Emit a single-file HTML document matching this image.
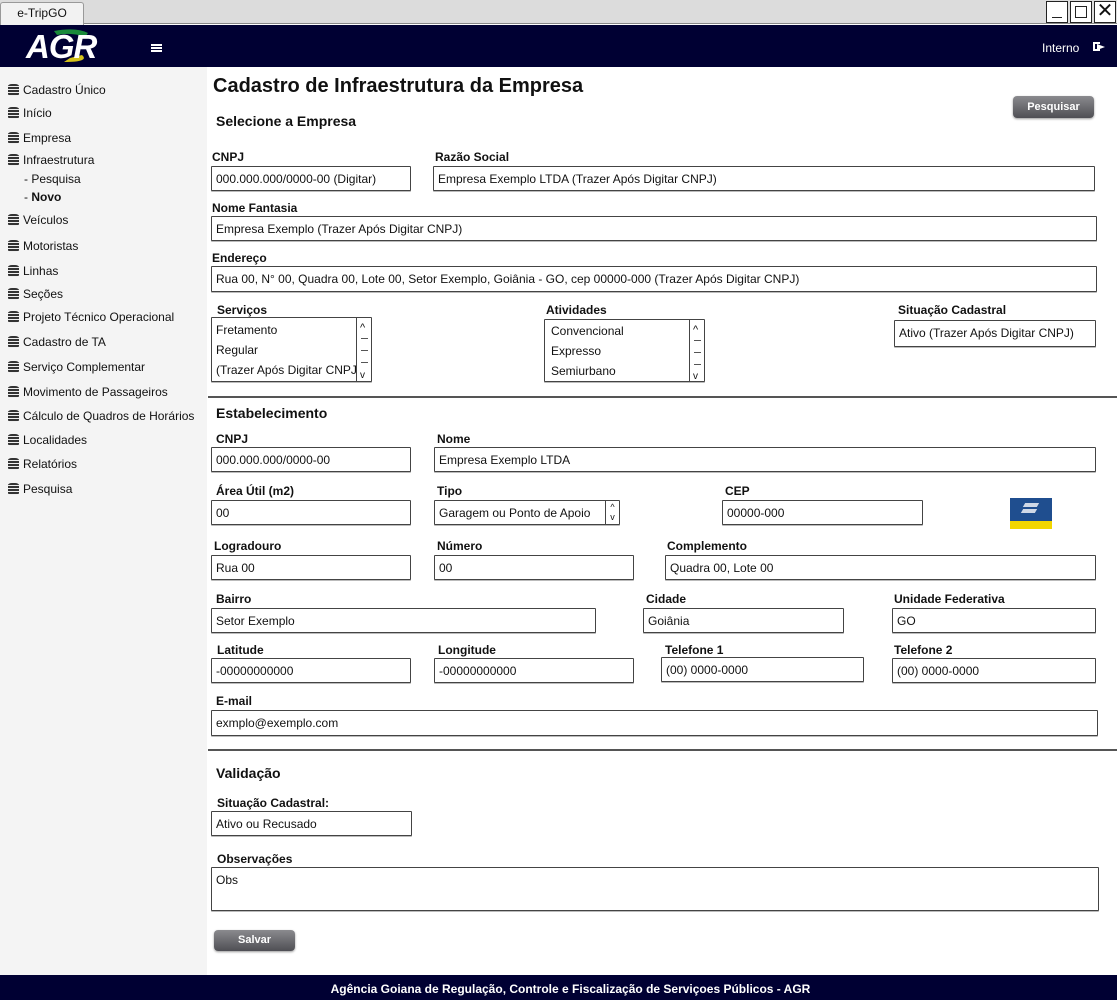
<!DOCTYPE html>
<html><head><meta charset="utf-8">
<style>
*{box-sizing:border-box;margin:0;padding:0}
body{width:1117px;height:1000px;position:relative;overflow:hidden;background:#fff;font-family:"Liberation Sans",Arial,sans-serif;font-size:12px;color:#111}
.a{position:absolute}
.lb{position:absolute;font-weight:bold;font-size:12px;color:#111}
.in{position:absolute;border:1px solid #444;border-radius:1px;background:#fff;height:25px;padding:0 4px;line-height:25px;font-size:12px;box-shadow:0 1px 0 #bbb;white-space:nowrap;overflow:hidden}
.btn{position:absolute;background:linear-gradient(#8a8a8e,#4f4f54);border-radius:4px;color:#fff;font-weight:bold;font-size:11px;text-align:center;box-shadow:0 1px 2px #999}
.nav{position:absolute;left:8px;font-size:12px;color:#111;display:flex;align-items:center}
.ic{width:11px;height:12px;margin-right:4px;display:inline-block;background:repeating-linear-gradient(#333 0 2px,#eee 2px 3px);border-radius:4px/2px}
.hr{position:absolute;left:208px;width:909px;height:2px;background:#555}
.sb{position:absolute;width:16px;top:-1px;bottom:-1px;right:-1px;border:1px solid #444;background:#fff}
.sb i{position:absolute;left:4px;width:7px;height:1px;background:#555}
</style></head><body>
<div class="a" style="left:0;top:0;width:1117px;height:24px;background:#dcdcdc;border-bottom:1px solid #888"></div>
<div class="a" style="left:0;top:2px;width:84px;height:23px;background:#f2f2f2;border:1px solid #999;border-bottom:none;border-radius:3px 3px 0 0;text-align:center;line-height:20px;font-size:12px">e-TripGO</div>
<div class="a" style="left:1046px;top:1px;width:22px;height:22px;border:1px solid #222;background:#fff"><div class="a" style="left:5px;top:15px;width:10px;height:1px;background:#222"></div></div>
<div class="a" style="left:1070px;top:1px;width:22px;height:22px;border:1px solid #222;background:#fff"><div class="a" style="left:4px;top:4px;width:12px;height:12px;border:1px solid #222"></div></div>
<div class="a" style="left:1094px;top:1px;width:22px;height:22px;border:1px solid #222;background:#fff;font-size:20px;line-height:19px;text-align:center">✕</div>
<div class="a" style="left:0;top:25px;width:1117px;height:42px;background:#000033"></div>
<svg class="a" style="left:24px;top:27px" width="84" height="38"><path d="M30 4 Q52 0 64 6 L61 10 Q48 5 33 8Z" fill="#1a8a3a"/><path d="M58 28 Q66 35 40 35 L46 31Z" fill="#d4c21a"/><text x="2" y="31" font-family="Liberation Sans" font-weight="bold" font-style="italic" font-size="33" fill="#fff" letter-spacing="-1">AGR</text></svg>
<div class="a" style="left:151px;top:44px;width:11px;height:2px;background:#fff;box-shadow:0 3px 0 #fff,0 6px 0 #fff"></div>
<div class="a" style="left:1042px;top:41px;color:#fff;font-size:12px">Interno</div>
<div class="a" style="left:1093px;top:42px;width:7px;height:9px;border:2px solid #fff;border-right:none"></div>
<div class="a" style="left:1097px;top:44px;width:0;height:0;border-left:8px solid #fff;border-top:3px solid transparent;border-bottom:3px solid transparent"></div>
<div class="a" style="left:0;top:67px;width:207px;height:908px;background:#f4f4f4"></div>
<div class="nav" style="top:83px"><span class="ic"></span>Cadastro Único</div>
<div class="nav" style="top:106px"><span class="ic"></span>Início</div>
<div class="nav" style="top:131px"><span class="ic"></span>Empresa</div>
<div class="nav" style="top:153px"><span class="ic"></span>Infraestrutura</div>
<div class="a" style="left:24px;top:172px">- Pesquisa</div>
<div class="a" style="left:24px;top:190px">- <b>Novo</b></div>
<div class="nav" style="top:213px"><span class="ic"></span>Veículos</div>
<div class="nav" style="top:239px"><span class="ic"></span>Motoristas</div>
<div class="nav" style="top:264px"><span class="ic"></span>Linhas</div>
<div class="nav" style="top:287px"><span class="ic"></span>Seções</div>
<div class="nav" style="top:310px"><span class="ic"></span>Projeto Técnico Operacional</div>
<div class="nav" style="top:335px"><span class="ic"></span>Cadastro de TA</div>
<div class="nav" style="top:360px"><span class="ic"></span>Serviço Complementar</div>
<div class="nav" style="top:385px"><span class="ic"></span>Movimento de Passageiros</div>
<div class="nav" style="top:409px"><span class="ic"></span>Cálculo de Quadros de Horários</div>
<div class="nav" style="top:433px"><span class="ic"></span>Localidades</div>
<div class="nav" style="top:457px"><span class="ic"></span>Relatórios</div>
<div class="nav" style="top:482px"><span class="ic"></span>Pesquisa</div>

<div class="a" style="left:213px;top:75px;font-size:20px;font-weight:bold">Cadastro de Infraestrutura da Empresa</div>
<div class="a" style="left:216px;top:113px;font-size:14px;font-weight:bold">Selecione a Empresa</div>
<div class="btn" style="left:1013px;top:96px;width:81px;height:22px;line-height:22px">Pesquisar</div>

<div class="lb" style="left:212px;top:150px">CNPJ</div><div class="in" style="left:211px;top:166px;width:200px">000.000.000/0000-00 (Digitar)</div>
<div class="lb" style="left:435px;top:150px">Razão Social</div><div class="in" style="left:433px;top:166px;width:662px">Empresa Exemplo LTDA (Trazer Após Digitar CNPJ)</div>
<div class="lb" style="left:212px;top:201px">Nome Fantasia</div><div class="in" style="left:211px;top:216px;width:886px">Empresa Exemplo (Trazer Após Digitar CNPJ)</div>
<div class="lb" style="left:212px;top:251px">Endereço</div><div class="in" style="left:211px;top:266px;width:886px;height:26px">Rua 00, N° 00, Quadra 00, Lote 00, Setor Exemplo, Goiânia - GO, cep 00000-000 (Trazer Após Digitar CNPJ)</div>

<div class="lb" style="left:217px;top:303px">Serviços</div>
<div class="in" style="left:211px;top:317px;width:161px;height:65px;line-height:20px;padding-top:2px">Fretamento<br>Regular<br>(Trazer Após Digitar CNPJ)<div class="sb"><div class="a" style="left:3px;top:0;font-size:11px">^</div><i style="top:20px"></i><i style="top:32px"></i><i style="top:44px"></i><div class="a" style="left:3px;top:48px;font-size:10px">v</div></div></div>
<div class="lb" style="left:546px;top:303px">Atividades</div>
<div class="in" style="left:544px;top:319px;width:161px;height:63px;line-height:20px;padding-top:1px;padding-left:6px">Convencional<br>Expresso<br>Semiurbano<div class="sb"><div class="a" style="left:3px;top:0;font-size:11px">^</div><i style="top:20px"></i><i style="top:32px"></i><i style="top:44px"></i><div class="a" style="left:3px;top:47px;font-size:10px">v</div></div></div>
<div class="lb" style="left:898px;top:303px">Situação Cadastral</div><div class="in" style="left:894px;top:320px;width:202px;height:27px">Ativo (Trazer Após Digitar CNPJ)</div>

<div class="hr" style="top:396px"></div>
<div class="a" style="left:216px;top:405px;font-size:14px;font-weight:bold">Estabelecimento</div>
<div class="lb" style="left:216px;top:432px">CNPJ</div><div class="in" style="left:211px;top:447px;width:200px">000.000.000/0000-00</div>
<div class="lb" style="left:437px;top:432px">Nome</div><div class="in" style="left:434px;top:447px;width:662px">Empresa Exemplo LTDA</div>
<div class="lb" style="left:216px;top:484px">Área Útil (m2)</div><div class="in" style="left:211px;top:500px;width:200px">00</div>
<div class="lb" style="left:437px;top:484px">Tipo</div><div class="in" style="left:434px;top:500px;width:186px">Garagem ou Ponto de Apoio<div class="a" style="right:0;top:0;width:14px;height:23px;border-left:1px solid #444;font-size:9px;line-height:10px;text-align:center;padding-top:1px">^<br>v</div></div>
<div class="lb" style="left:725px;top:484px">CEP</div><div class="in" style="left:722px;top:500px;width:201px">00000-000</div>
<div class="a" style="left:1010px;top:498px;width:42px;height:31px;background:#1f4e8f"><div class="a" style="left:0;bottom:0;width:42px;height:8px;background:#f2d600"></div><div class="a" style="left:14px;top:5px;width:14px;height:4px;background:#cfd8e6;transform:skewX(-30deg)"></div><div class="a" style="left:12px;top:11px;width:14px;height:4px;background:#cfd8e6;transform:skewX(-30deg)"></div></div>
<div class="lb" style="left:214px;top:539px">Logradouro</div><div class="in" style="left:211px;top:555px;width:200px">Rua 00</div>
<div class="lb" style="left:437px;top:539px">Número</div><div class="in" style="left:434px;top:555px;width:200px">00</div>
<div class="lb" style="left:667px;top:539px">Complemento</div><div class="in" style="left:665px;top:555px;width:431px">Quadra 00, Lote 00</div>
<div class="lb" style="left:216px;top:592px">Bairro</div><div class="in" style="left:211px;top:608px;width:385px">Setor Exemplo</div>
<div class="lb" style="left:646px;top:592px">Cidade</div><div class="in" style="left:643px;top:608px;width:201px">Goiânia</div>
<div class="lb" style="left:894px;top:592px">Unidade Federativa</div><div class="in" style="left:892px;top:608px;width:204px">GO</div>
<div class="lb" style="left:217px;top:643px">Latitude</div><div class="in" style="left:211px;top:658px;width:200px">-00000000000</div>
<div class="lb" style="left:438px;top:643px">Longitude</div><div class="in" style="left:434px;top:658px;width:200px">-00000000000</div>
<div class="lb" style="left:665px;top:643px">Telefone 1</div><div class="in" style="left:661px;top:657px;width:203px">(00) 0000-0000</div>
<div class="lb" style="left:894px;top:643px">Telefone 2</div><div class="in" style="left:892px;top:658px;width:204px">(00) 0000-0000</div>
<div class="lb" style="left:216px;top:694px">E-mail</div><div class="in" style="left:211px;top:710px;width:887px;height:26px">exmplo@exemplo.com</div>

<div class="hr" style="top:749px"></div>
<div class="a" style="left:216px;top:765px;font-size:14px;font-weight:bold">Validação</div>
<div class="lb" style="left:217px;top:796px">Situação Cadastral:</div><div class="in" style="left:211px;top:811px;width:201px">Ativo ou Recusado</div>
<div class="lb" style="left:217px;top:852px">Observações</div><div class="in" style="left:211px;top:867px;width:888px;height:44px;line-height:24px">Obs</div>
<div class="btn" style="left:214px;top:930px;width:81px;height:21px;line-height:21px">Salvar</div>

<div class="a" style="left:0;top:975px;width:1117px;height:25px;background:#000033;color:#fff;font-weight:bold;font-size:12px;line-height:28px;text-align:center;padding-left:24px">Agência Goiana de Regulação, Controle e Fiscalização de Serviçoes Públicos - AGR</div>
</body></html>
